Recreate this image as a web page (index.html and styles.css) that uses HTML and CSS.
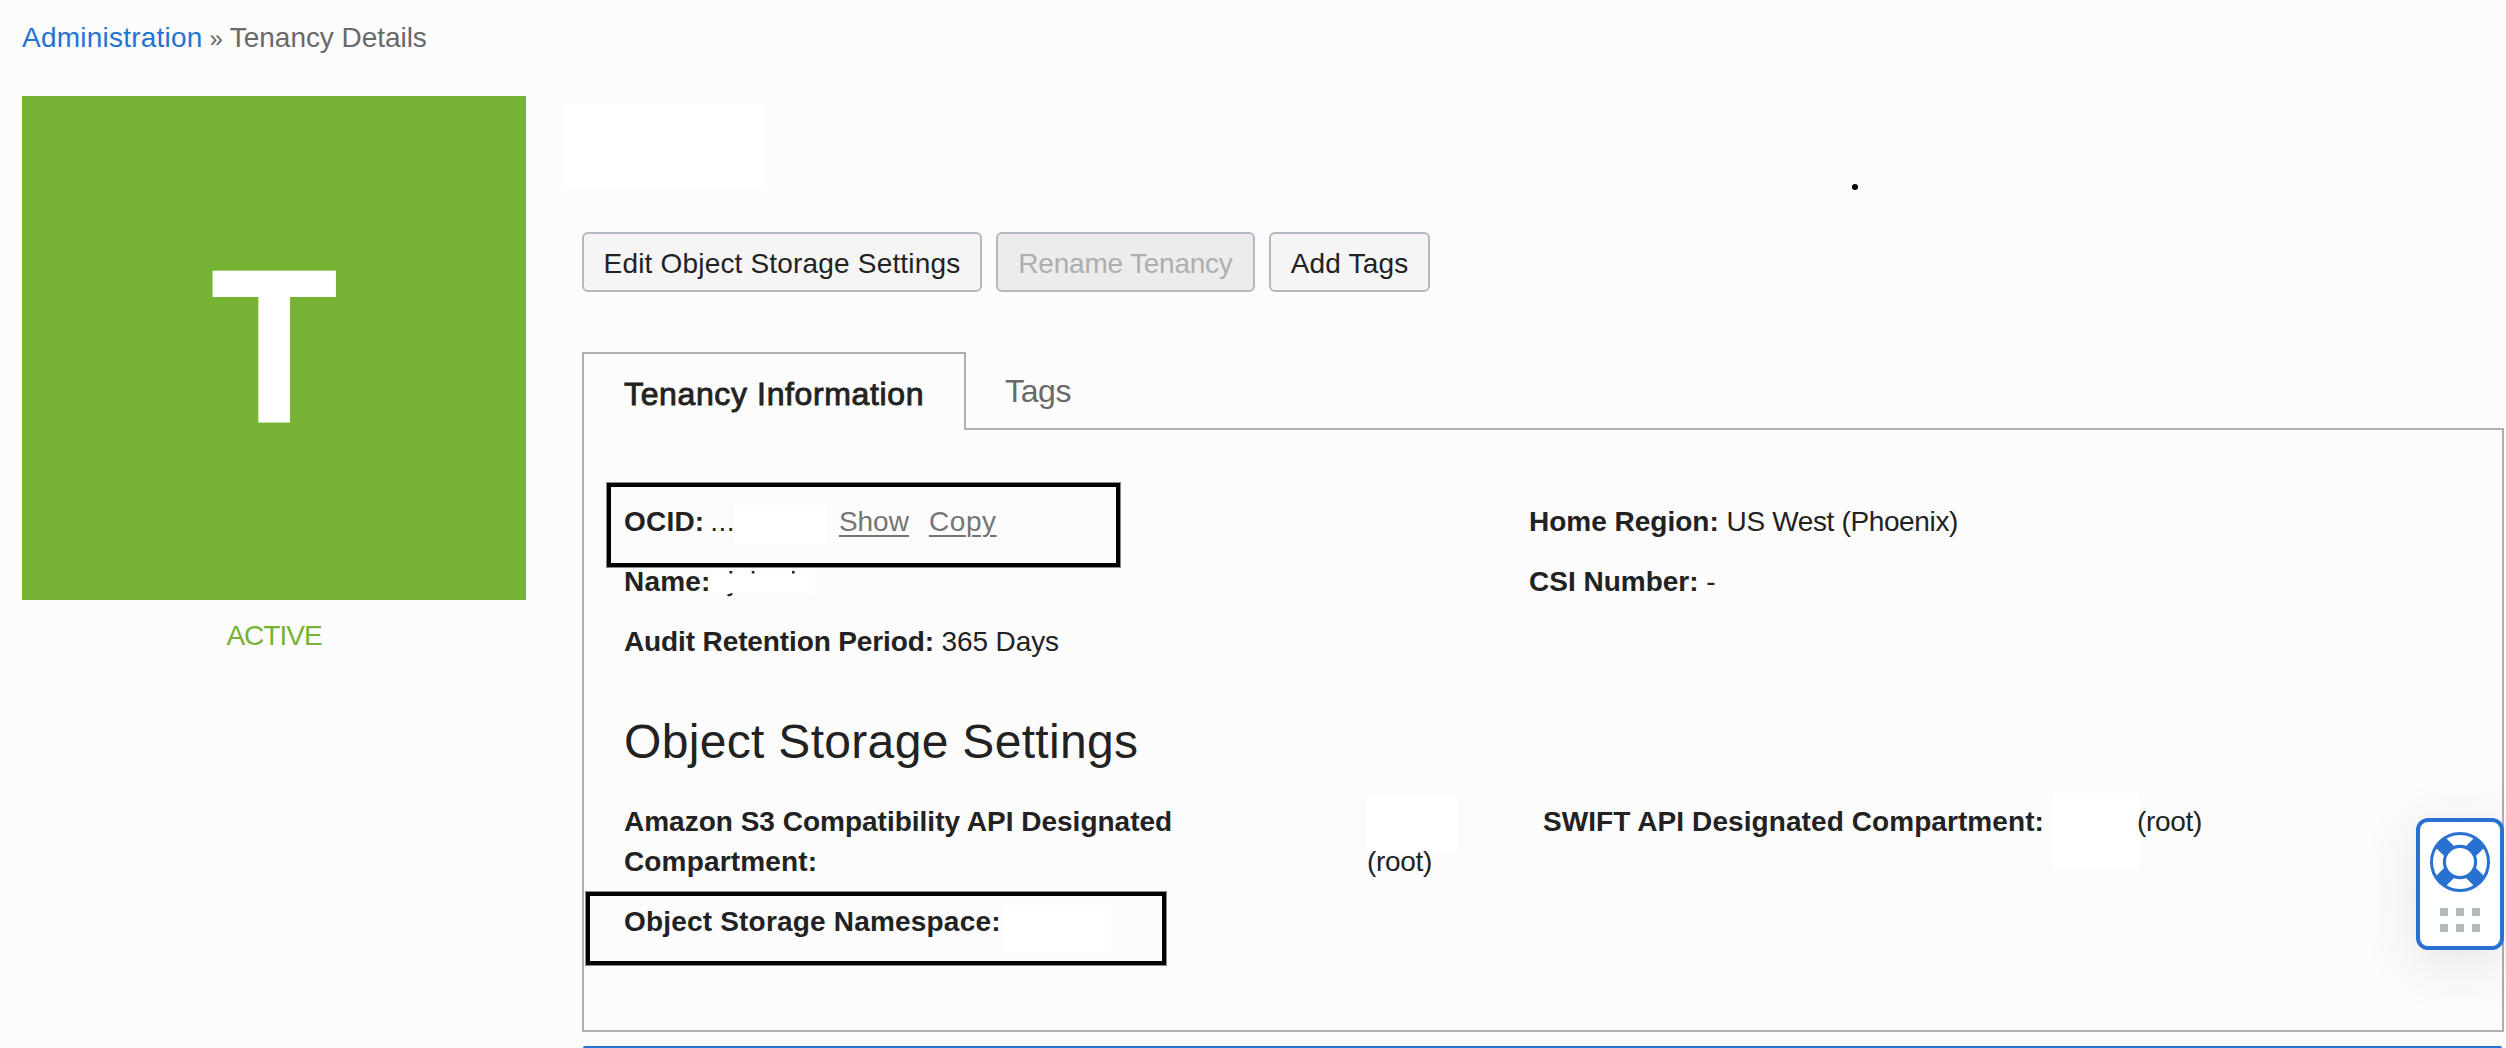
FILE: index.html
```
<!DOCTYPE html>
<html lang="en">
<head>
<meta charset="utf-8">
<title>Tenancy Details</title>
<link rel="stylesheet" href="styles.css">
</head>
<body>
<nav class="breadcrumb">
  <a class="crumb-link" href="#">Administration</a>
  <span class="crumb-sep">»</span>
  <span class="crumb-current">Tenancy Details</span>
</nav>
<div class="layout">
  <aside class="side">
    <div class="avatar"><span class="avatar-letter">T</span></div>
    <div class="status">ACTIVE</div>
  </aside>
  <main class="main">
    <header class="title-area">
      <div class="title-mask"></div>
      <span class="title-dot"></span>
    </header>
    <div class="actions">
      <button class="btn btn-edit">Edit Object Storage Settings</button>
      <button class="btn btn-rename" disabled>Rename Tenancy</button>
      <button class="btn btn-tags">Add Tags</button>
    </div>
    <div class="tabs">
      <div class="tab tab-active">Tenancy Information</div>
      <div class="tab">Tags</div>
    </div>
    <section class="panel">
      <div class="info">
        <div class="row ocid"><b>OCID:</b><span class="dots">...</span><i class="mask mask-ocid"></i><a class="action show" href="#">Show</a><a class="action copy" href="#">Copy</a></div>
        <div class="row region"><b>Home Region:</b> <span>US West (Phoenix)</span></div>
        <div class="row name"><b>Name:</b><span class="name-value"><i class="mask mask-name"></i><svg class="name-traces" width="70" height="28" viewBox="0 0 70 28"><path d="M3.5 1v2.5h2.8V1zM25.8 1v2.5h2.6V1zM66 1v2.5h2.6V1z" fill="#222"/><path d="M1.5 25c2.2.5 4-.2 4.3-1.8" fill="none" stroke="#222" stroke-width="2.2"/></svg></span></div>
        <div class="row csi"><b>CSI Number:</b> <span>-</span></div>
        <div class="row audit"><b>Audit Retention Period:</b> <span>365 Days</span></div>
      </div>
      <h2 class="section-title">Object Storage Settings</h2>
      <div class="storage">
        <b class="s3-label">Amazon S3 Compatibility API Designated<br><span class="s3-second">Compartment:</span></b>
        <div class="s3-value"><i class="mask mask-s3"></i>(root)</div>
        <div class="swift"><b>SWIFT API Designated Compartment:</b><i class="mask mask-swift"></i><span class="root">(root)</span></div>
      </div>
      <div class="row namespace"><b>Object Storage Namespace:</b><i class="mask mask-namespace"></i></div>
      <div class="highlight highlight-ocid"></div>
      <div class="highlight highlight-namespace"></div>
    </section>
    <div class="next-bar"></div>
  </main>
</div>
<div class="support">
  <svg width="60" height="60" viewBox="-30 -30 60 60">
    <g fill="none" stroke="#2871d0">
      <path d="M-19.5-19.5-11-11M19.5-19.5 11-11M-19.5 19.5-11 11M19.5 19.5 11 11" stroke-width="14"/>
      <circle r="28.5" stroke-width="3"/>
      <circle r="15.6" stroke-width="3.2"/>
    </g>
  </svg>
  <div class="grip"><i></i><i></i><i></i><i></i><i></i><i></i></div>
</div>
</body>
</html>
```

FILE: styles.css
```
* { box-sizing: border-box; }
body {
  margin: 0;
  height: 1048px;
  overflow: hidden;
  position: relative;
  background: #fcfcfc;
  color: #222;
  font: 28px/40px "Liberation Sans", Arial, sans-serif;
}
a { color: inherit; }
.breadcrumb {
  display: flex;
  align-items: baseline;
  height: 96px;
  padding: 18px 0 0 22px;
  color: #696969;
}
.crumb-link { color: #2573d0; text-decoration: none; letter-spacing: .22px; }
.crumb-sep { font-size: 24px; margin: 0 7px; }
.crumb-current { letter-spacing: -.05px; }

.layout { display: flex; gap: 56px; padding-left: 22px; }
.side { width: 504px; }
.avatar {
  height: 504px;
  display: flex;
  align-items: center;
  justify-content: center;
  background: #76b334;
  color: #fff;
}
.avatar-letter {
  font-size: 217px;
  line-height: 240px;
  font-weight: bold;
  transform: scaleX(.95);
  margin-bottom: 5px;
  -webkit-text-stroke: 2px #fff;
}
.status {
  padding-top: 16px;
  text-align: center;
  color: #76b334;
  letter-spacing: -1px;
}
.main { width: 1922px; }
.title-area { position: relative; height: 136px; padding-top: 7px; }
.title-mask { width: 201px; height: 84px; margin-left: -19px; background: #fff; }
.title-dot {
  position: absolute;
  left: 1270px;
  top: 88px;
  width: 6px;
  height: 6px;
  border-radius: 50%;
  background: #000;
}
.actions { display: flex; gap: 14px; }
.btn {
  height: 60px;
  padding: 3px 0 0;
  border: 2px solid #b2b9c3;
  border-radius: 6px;
  background: #f5f5f5;
  color: #222;
  font: inherit;
  text-align: center;
}
.btn-edit { width: 400px; letter-spacing: .18px; }
.btn-rename { width: 259px; letter-spacing: -.22px; background: #ececec; color: #aeaeae; }
.btn-tags { width: 161px; letter-spacing: .18px; }

.tabs { display: flex; margin-top: 60px; height: 76px; font-size: 32px; }
.tab { padding: 2px 39px 0; line-height: 74px; color: #696969; letter-spacing: -.35px; }
.tab-active {
  position: relative;
  z-index: 1;
  width: 384px;
  height: 78px;
  padding: 5px 0 0 40px;
  line-height: 70px;
  border: 2px solid #aeaeae;
  border-bottom: 0;
  background: #fcfcfc;
  color: #222;
  letter-spacing: .63px;
  -webkit-text-stroke: .9px #222;
}
.panel {
  position: relative;
  height: 604px;
  padding: 72px 0 0 40px;
  border: 2px solid #aeaeae;
}
.info { display: grid; grid-template-columns: 905px 1fr; row-gap: 20px; }
.row { height: 40px; white-space: nowrap; }
.mask { display: block; background: #fff; }
.ocid { display: flex; }
.ocid b { letter-spacing: .2px; }
.dots { margin-left: 6px; letter-spacing: .4px; }
.mask-ocid { width: 91px; height: 38px; margin: 4px 13px 0 0; }
.action {
  color: #757575;
  text-decoration-thickness: 1.5px;
  text-underline-offset: 4px;
}
.copy { margin-left: 20px; letter-spacing: .6px; }
.region span { letter-spacing: -.36px; }
.name { display: flex; }
.name b { letter-spacing: .2px; }
.name-value { position: relative; width: 104px; }
.mask-name { width: 104px; height: 19px; margin-top: 12px; }
.name-traces { position: absolute; left: 15px; top: 8px; }
.audit { letter-spacing: -.12px; }
.section-title {
  margin: 50px 0 30px;
  font-size: 48px;
  line-height: 60px;
  font-weight: normal;
  letter-spacing: .32px;
}
.storage { display: grid; grid-template-columns: 743px 176px 1fr; height: 80px; }
.s3-second { letter-spacing: .15px; }
.s3-value { margin-top: -5px; letter-spacing: -.3px; }
.mask-s3 { width: 90px; height: 54px; margin-bottom: -9px; }
.swift { display: flex; height: 40px; letter-spacing: .08px; }
.mask-swift { width: 86px; height: 74px; margin: -9px -2px 0 9px; }
.root { letter-spacing: -.3px; }
.namespace { display: flex; margin-top: 20px; letter-spacing: .19px; }
.mask-namespace { width: 108px; height: 46px; margin: 4px 0 0 2px; }

.highlight { position: absolute; border: 4px solid #000; outline: 1px solid #8a8a8a; }
.highlight-ocid { left: 23px; top: 53px; width: 513px; height: 84px; }
.highlight-namespace { left: 2px; top: 462px; width: 580px; height: 73px; }

.next-bar { height: 2px; margin: 14px 2px 0 1px; border-radius: 2px 2px 0 0; background: #2871d0; }

.support {
  position: absolute;
  left: 2416px;
  top: 818px;
  z-index: 2;
  width: 88px;
  height: 132px;
  padding: 10px;
  border: 4px solid #2871d0;
  border-radius: 12px;
  background: #fff;
  box-shadow: 0 12px 56px rgba(50, 55, 60, .12);
}
.support svg { display: block; }
.grip { display: grid; grid-template-columns: repeat(3, 8px); gap: 8px; margin: 16px 0 0 10px; }
.grip i { height: 8px; background: #b2b9c1; }
```
